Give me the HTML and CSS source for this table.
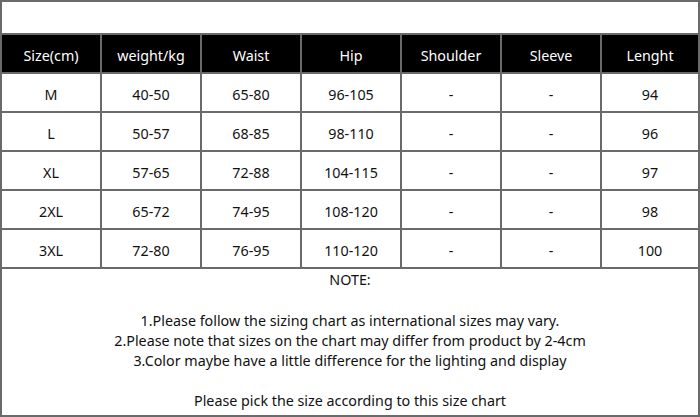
FILE: index.html
```html
<!DOCTYPE html>
<html>
<head>
<meta charset="utf-8">
<link rel="stylesheet" href="styles.css">
</head>
<body>
<div class="sheet">
  <div class="spacer"></div>
  <div class="grid">
    <div class="cell head">Size(cm)</div>
    <div class="cell head">weight/kg</div>
    <div class="cell head">Waist</div>
    <div class="cell head">Hip</div>
    <div class="cell head">Shoulder</div>
    <div class="cell head">Sleeve</div>
    <div class="cell head">Lenght</div>

    <div class="cell">M</div><div class="cell">40-50</div><div class="cell">65-80</div><div class="cell">96-105</div><div class="cell">-</div><div class="cell">-</div><div class="cell">94</div>
    <div class="cell">L</div><div class="cell">50-57</div><div class="cell">68-85</div><div class="cell">98-110</div><div class="cell">-</div><div class="cell">-</div><div class="cell">96</div>
    <div class="cell">XL</div><div class="cell">57-65</div><div class="cell">72-88</div><div class="cell">104-115</div><div class="cell">-</div><div class="cell">-</div><div class="cell">97</div>
    <div class="cell">2XL</div><div class="cell">65-72</div><div class="cell">74-95</div><div class="cell">108-120</div><div class="cell">-</div><div class="cell">-</div><div class="cell">98</div>
    <div class="cell">3XL</div><div class="cell">72-80</div><div class="cell">76-95</div><div class="cell">110-120</div><div class="cell">-</div><div class="cell">-</div><div class="cell">100</div>
  </div>
  <div class="notes">
    <p class="note-title">NOTE:</p>
    <p class="note-list">1.Please follow the sizing chart as international sizes may vary.<br>2.Please note that sizes on the chart may differ from product by 2-4cm<br>3.Color maybe have a little difference for the lighting and display</p>
    <p class="note-end">Please pick the size according to this size chart</p>
  </div>
</div>
</body>
</html>
```

FILE: styles.css
```css
html, body {
  margin: 0;
  padding: 0;
  background: #fff;
}
.sheet {
  width: 700px;
  height: 417px;
  box-sizing: border-box;
  border: 2px solid #6a6a6a;
  display: flex;
  flex-direction: column;
  font-family: "Noto Sans", "Open Sans", sans-serif;
  font-size: 14.3px;
  color: #111;
}
.spacer {
  height: 31px;
}
.grid {
  display: grid;
  grid-template-columns: repeat(6, 98px) 1fr;
  grid-auto-rows: 37px;
  gap: 2px;
  background: #6a6a6a;
  padding: 2px 0;
}
.cell {
  background: #fff;
  display: flex;
  align-items: center;
  justify-content: center;
  padding-top: 3px;
  box-sizing: border-box;
}
.cell.head {
  background: #000;
  color: #fff;
}
.notes {
  flex: 1;
  display: flex;
  flex-direction: column;
  align-items: center;
  text-align: center;
}
.notes p {
  margin: 0;
}
.note-title {
  margin-top: 1px !important;
  line-height: 20px;
}
.note-list {
  margin-top: 21px !important;
  line-height: 20px;
}
.note-end {
  margin-top: 20px !important;
  line-height: 20px;
}
```
